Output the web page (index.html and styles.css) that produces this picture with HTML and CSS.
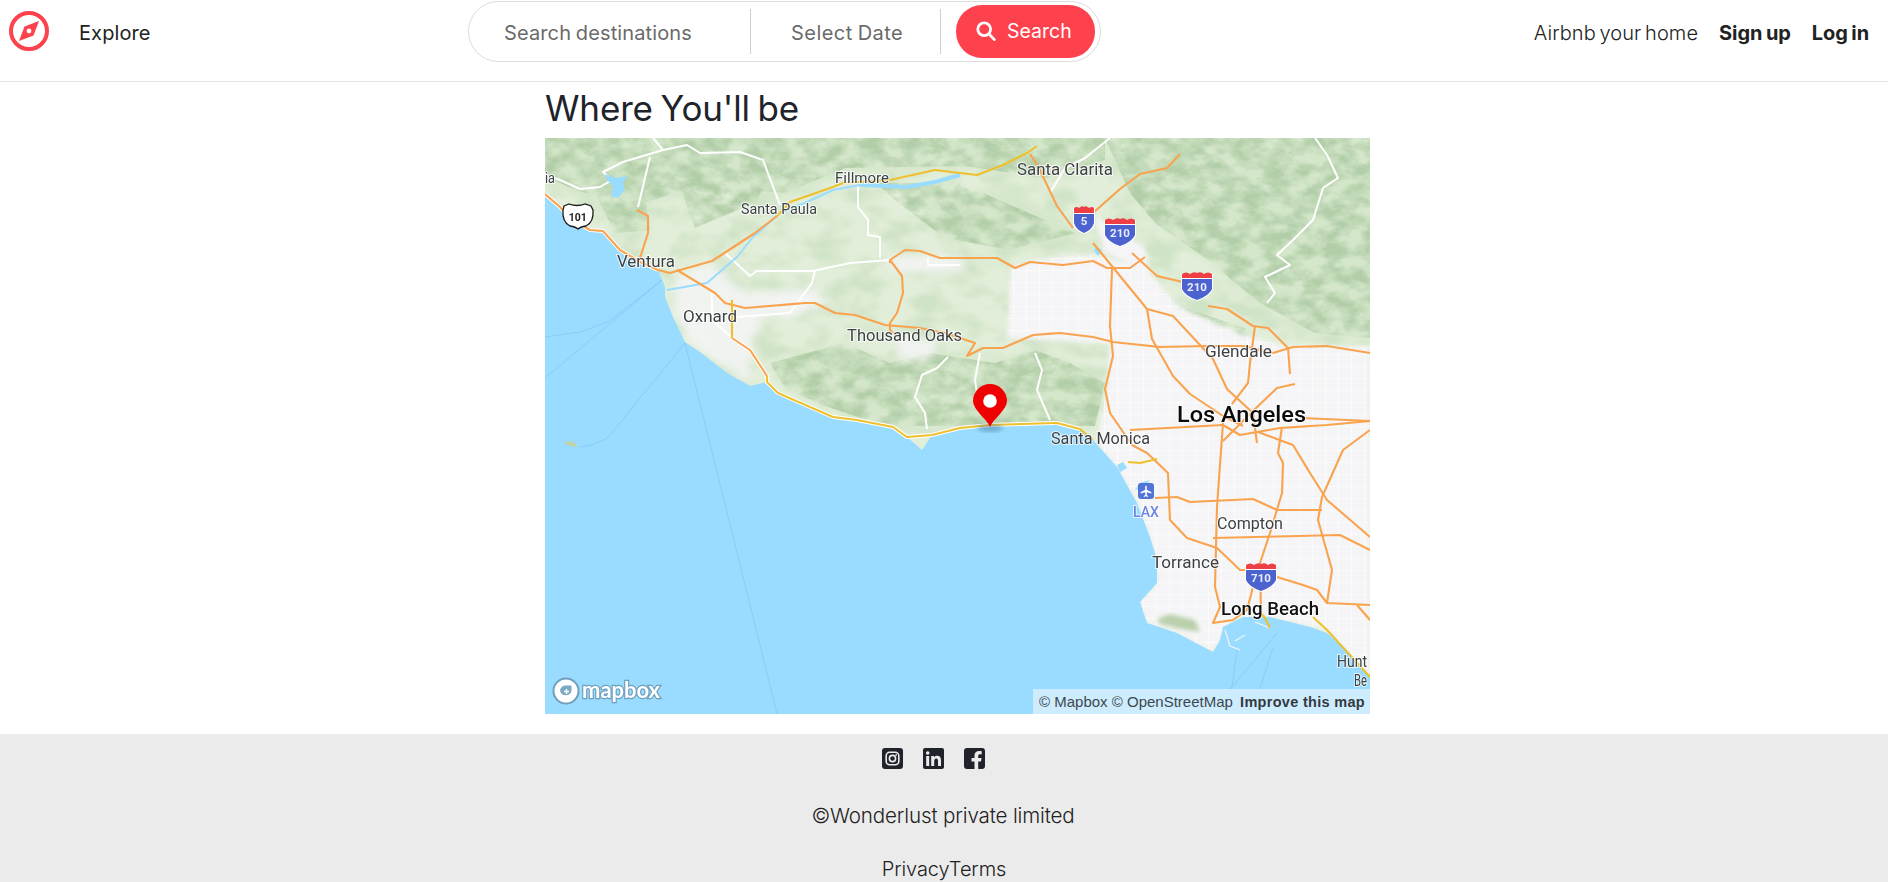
FILE: index.html
```html
<!DOCTYPE html>
<html lang="en">
<head>
<meta charset="utf-8">
<title>Where You'll be</title>
<link rel="stylesheet" href="styles.css">
</head>
<body>
<nav class="nav">
  <div class="nav-left">
    <svg class="logo" viewBox="0 0 40 40"><circle class="logo-ring" cx="20" cy="20" r="18"/><path class="logo-needle" d="M30 10 L24.5 24.5 L10 30 L15.5 15.5 Z"/><circle class="logo-hole" cx="20" cy="20" r="2.4"/></svg>
    <a class="nav-link explore">Explore</a>
  </div>
  <div class="searchbar">
    <span class="field field-dest">Search destinations</span>
    <span class="divider"></span>
    <span class="field field-date">Select Date</span>
    <span class="divider"></span>
    <button class="search-btn">
      <svg class="search-icon" viewBox="0 0 20 20"><circle cx="8.2" cy="8.2" r="6.4"/><path d="M13 13 L18.4 18.6"/></svg>
      <span>Search</span>
    </button>
  </div>
  <div class="nav-right">
    <a class="nav-link home-link">Airbnb your home</a>
    <a class="nav-link strong">Sign up</a>
    <a class="nav-link strong">Log in</a>
  </div>
</nav>

<main class="content">
  <h3 class="title">Where You'll be</h3>
  <div class="map">
    <svg class="map-svg" viewBox="0 0 825 576" width="825" height="576">
      <defs>
        <filter id="soft" x="-10%" y="-10%" width="120%" height="120%"><feGaussianBlur stdDeviation="4"/></filter>
        <filter id="softer" x="-10%" y="-10%" width="120%" height="120%"><feGaussianBlur stdDeviation="2"/></filter>
        <filter id="hill" x="0" y="0" width="100%" height="100%">
          <feTurbulence type="fractalNoise" baseFrequency="0.05 0.075" numOctaves="4" seed="7" result="n"/>
          <feColorMatrix in="n" type="matrix" values="0 0 0 0 0  0 0 0 0 0  0 0 0 0 0  2.4 0 0 0 -0.72" result="a"/>
          <feComposite in="SourceGraphic" in2="a" operator="in" result="c"/>
          <feGaussianBlur in="c" stdDeviation="0.7"/>
        </filter>
        <filter id="faint" x="0" y="0" width="100%" height="100%">
          <feTurbulence type="fractalNoise" baseFrequency="0.03 0.05" numOctaves="3" seed="21" result="n"/>
          <feColorMatrix in="n" type="matrix" values="0 0 0 0 0  0 0 0 0 0  0 0 0 0 0  3 0 0 0 -1.2" result="a"/>
          <feComposite in="SourceGraphic" in2="a" operator="in" result="c"/>
          <feGaussianBlur in="c" stdDeviation="1.2"/>
        </filter>
        <pattern id="grid" width="13" height="12" patternUnits="userSpaceOnUse"><path class="grid-line" d="M0 0H13M0 0V12"/></pattern>
        <clipPath id="urban-clip"><path d="M462 200 L466 130 L490 122 L545 116 L600 130 L635 170 L700 198 L740 208 L825 208 L825 540 L782 492 L725 479 L690 480 L668 514 L632 495 L602 485 L595 464 L612 445 L612 422 L592 365 L572 329 L552 305 L562 250 L565 205 Z"/></clipPath>
      </defs>

      <rect class="land" width="825" height="576"/>
      <rect class="land-noise" width="825" height="300" filter="url(#faint)"/>

      <g class="lowland" filter="url(#soft)">
        <path d="M0 0H560V22L500 40L420 28L300 35L240 60L150 50L90 70L30 55L0 40Z"/>
        <path d="M50 55L100 60L105 92L70 95Z"/>
        <path d="M560 0H825V200L770 195L715 165L660 120L610 85L585 55Z"/>
        <path d="M225 225L300 205L345 225L385 215L450 225L490 212L525 225L560 245L550 288L420 288L340 288L280 268L240 250Z"/>
        <path d="M350 45L415 55L470 50L530 95L465 112L400 100Z"/>
      </g>
      <g class="hills" filter="url(#hill)">
        <path d="M0 0H560V22L500 40L420 28L300 30L240 55L150 48L90 68L30 52L0 38Z"/>
        <path d="M50 55L100 60L105 92L70 95Z"/>
        <path d="M560 0H825V200L770 195L715 165L660 120L610 85L585 55Z"/>
        <path d="M225 225L300 205L345 225L385 215L450 225L490 212L525 225L560 245L550 288L420 288L340 288L280 268L240 250Z"/>
        <path d="M330 45L415 45L530 95L465 112L400 100L360 70Z"/>
        <path d="M640 170L700 190L708 222L665 195Z"/>
        <path d="M130 35L230 30L210 65L150 90Z"/>
      </g>

      <g class="urban" filter="url(#softer)">
        <path d="M462 200 L466 130 L490 122 L545 116 L600 130 L635 170 L700 198 L740 208 L825 208 L825 540 L782 492 L725 479 L690 480 L668 514 L632 495 L602 485 L595 464 L612 445 L612 422 L592 365 L572 329 L552 305 L562 250 L565 205 Z"/>
        <path d="M550 78L600 110L605 135L560 115Z"/>
      </g>
      <g class="urban-soft" filter="url(#soft)">
        <path d="M130 140L165 125L190 145L205 155L250 150L280 165L250 178L215 180L205 215L205 244L182 232L155 212L142 200L130 175Z"/>
        <path d="M340 118L420 118L420 135L350 135Z"/>
        <path d="M350 198L395 203L385 222L352 222Z"/>
        <path d="M225 165L265 150L285 165L245 178Z"/>
      </g>
      <rect class="grid-fill" width="825" height="576" fill="url(#grid)" clip-path="url(#urban-clip)"/>
      <path class="palos" filter="url(#softer)" d="M612 481L625 476L650 482L655 494L635 491L615 486Z"/>

      <g class="white-roads">
        <polyline points="108,0 118,12 142,7 155,15 195,14 218,22 235,67"/>
        <polyline points="118,12 78,24 58,34 67,42 55,49 35,51 15,42 0,37"/>
        <polyline points="105,19 93,69"/>
        <polyline points="180,115 205,138 212,133 268,133 305,125 345,122"/>
        <polyline points="270,133 267,145 245,175 192,179"/>
        <polyline points="167,152 167,182 185,198"/>
        <polyline points="313,47 313,69 323,82 323,97 335,99 335,120"/>
        <polyline points="383,120 383,127 415,127"/>
        <polyline points="403,219 392,230 377,237 370,259 380,275 382,291"/>
        <polyline points="770,0 782,17 793,40 778,50 768,82 748,102 732,117 745,127 720,139 730,155 722,165"/>
        <polyline points="490,215 497,232 492,252 505,282"/>
        <polyline points="435,215 430,242 435,275"/>
        <polyline points="565,0 540,20 520,30 505,55"/>
      </g>

      <path class="water" d="M0 57L15 69L28 85L45 92L58 95L75 112L95 124L113 132L120 149L120 159L128 179L140 204L155 214L182 235L205 248L222 244L233 255L265 269L288 279L312 282L348 289L362 299L377 312L387 297L415 290L445 287L512 285L535 291L548 302L572 329L582 347L592 365L605 399L612 422L612 445L595 464L602 485L632 495L668 514L675 502L678 489L698 479L725 479L765 489L782 495L802 512L825 539V576H0Z"/>
      <path class="water" d="M60 36L70 40L82 38L78 46L80 52L73 60L66 58L68 48L62 42Z"/>
      <polyline class="river river-wide" points="415,37 390,44 362,49 315,47"/>
      <polyline class="river" points="315,47 288,52 262,64 235,75 208,99 192,119 162,145 122,152"/>
      <path class="water" d="M595 345L605 342L598 350L590 352Z"/>
      <path class="water" d="M551 108L557 112L553 118L549 113Z"/>
      <path class="water" d="M572 327L578 324L582 330L575 334Z"/>
      <path class="island" d="M18 304L28 303L33 309L24 308Z"/>
      <g class="harbour">
        <polyline points="680,492 685,508 695,512"/>
        <polyline points="690,503 700,497"/>
        <polyline points="710,484 725,490"/>
      </g>

      <g class="lanes">
        <polyline points="117,142 0,240"/>
        <polyline points="117,142 63,184 35,194 0,199"/>
        <polyline points="140,205 70,291 63,300 47,307 35,309"/>
        <polyline points="140,205 232,576"/>
        <polyline points="692,512 687,549 642,576"/>
        <polyline points="732,495 687,549 662,576"/>
        <polyline points="728,509 707,576"/>
      </g>

      <g class="road-casing">
        <polyline points="187,200 205,212 222,238 222,244 233,255 265,269 288,279 312,282 348,289 362,299 375,298 387,297 415,290 445,287 512,285 535,291"/>
        <polyline points="0,56 15,69 25,80 45,92 58,93 75,112 95,124 113,132"/>
      </g>
      <g class="roads">
        <polyline points="0,56 15,69 25,80 45,92 58,93 75,112 95,124 113,132 125,135 135,132 167,123 210,95 232,78"/>
        <polyline points="132,132 170,155 180,165 200,170 260,165 270,165 290,175 310,177 340,187 375,190 400,195 430,205 422,218 438,210 458,210 488,197 515,195 548,199 568,204 615,209 662,208 698,208 728,215 748,209 782,208 825,215"/>
        <polyline points="187,200 205,212 222,238"/>
        <polyline points="345,125 345,122 360,112 375,113 395,120 415,120 452,120 470,130 485,124 518,127 548,123 562,130 585,130 600,119"/>
        <polyline points="345,122 357,138 358,155 352,175 345,185 345,192 350,197"/>
        <polyline points="92,72 103,78 103,95 95,120"/>
        <polyline points="485,16 493,28 512,68 528,90"/>
        <polyline points="635,16 622,30 595,36 575,51 548,75 547,85"/>
        <polyline points="548,105 602,171 628,178 668,221 682,251 708,275 712,305"/>
        <polyline points="587,115 612,138 642,145"/>
        <polyline points="663,168 682,171 708,188 723,190 743,210 745,236"/>
        <polyline points="710,188 705,225 703,245 687,266"/>
        <polyline points="750,246 732,250 708,273 678,303"/>
        <polyline points="567,131 565,188 568,218 560,251 565,275 587,307 602,315 623,335 625,382 642,400 672,410 695,432 702,432"/>
        <polyline points="602,171 607,201 628,238 645,256 678,278 698,288"/>
        <polyline points="585,292 678,287 695,297 735,290 782,287 825,283"/>
        <polyline points="758,280 825,283"/>
        <polyline points="678,285 672,369 670,449 675,469 668,485 688,482 702,472 708,449"/>
        <polyline points="610,360 632,359 645,364 708,361 732,372 777,372"/>
        <polyline points="737,289 733,315 738,325 737,355 725,395 715,425 716,475"/>
        <polyline points="668,400 795,397 825,412"/>
        <polyline points="732,439 758,447 772,452 782,465 825,467"/>
        <polyline points="782,465 787,432 773,382 777,359 798,312 825,292"/>
        <polyline points="713,294 748,307 765,335 782,362 825,399"/>
        <polyline points="812,467 825,482"/>
      </g>
      <g class="roads-yellow">
        <polyline points="232,78 245,64 288,49 298,45 345,42 390,32 415,35 432,37 458,27 482,15 492,8"/>
        <polyline points="187,162 187,200"/>
        <polyline points="222,238 222,244 233,255 265,269 288,279 312,282 348,289 362,299 375,298 387,297 415,290 445,287 512,285 535,291 548,302"/>
        <polyline points="583,324 595,325 612,321"/>
        <polyline points="768,479 782,492 825,539"/>
        <polyline points="716,475 720,480 725,490"/>
      </g>

      <g class="labels">
        <text x="0" y="45" textLength="10" lengthAdjust="spacingAndGlyphs">ia</text>
        <text x="290" y="45" textLength="54" lengthAdjust="spacingAndGlyphs">Fillmore</text>
        <text x="196" y="76" textLength="76" lengthAdjust="spacingAndGlyphs">Santa Paula</text>
        <text class="lab-m" x="72" y="129" textLength="58" lengthAdjust="spacingAndGlyphs">Ventura</text>
        <text class="lab-m" x="138" y="184" textLength="54" lengthAdjust="spacingAndGlyphs">Oxnard</text>
        <text class="lab-m" x="302" y="203" textLength="115" lengthAdjust="spacingAndGlyphs">Thousand Oaks</text>
        <text class="lab-m" x="472" y="37" textLength="96" lengthAdjust="spacingAndGlyphs">Santa Clarita</text>
        <text class="lab-m" x="660" y="219" textLength="67" lengthAdjust="spacingAndGlyphs">Glendale</text>
        <text class="lab-xl" x="632" y="284" textLength="129" lengthAdjust="spacingAndGlyphs">Los Angeles</text>
        <text class="lab-m" x="506" y="306" textLength="99" lengthAdjust="spacingAndGlyphs">Santa Monica</text>
        <text class="lab-m" x="672" y="391" textLength="66" lengthAdjust="spacingAndGlyphs">Compton</text>
        <text class="lab-m" x="607" y="430" textLength="67" lengthAdjust="spacingAndGlyphs">Torrance</text>
        <text class="lab-l" x="676" y="477" textLength="98" lengthAdjust="spacingAndGlyphs">Long Beach</text>
        <text class="lab-m" x="792" y="529" textLength="30" lengthAdjust="spacingAndGlyphs">Hunt</text>
        <text class="lab-m" x="809" y="548" textLength="13" lengthAdjust="spacingAndGlyphs">Be</text>
      </g>

      <g class="airport">
        <rect x="593" y="345" width="16" height="16" rx="3"/>
        <path class="plane" d="M601 347.5C600.3 347.5 600.2 348.5 600.2 349.5V351.8L595.6 354.2V355.4L600.2 354.2V356.9L598.8 358V358.9L601 358.2L603.2 358.9V358L601.8 356.9V354.2L606.4 355.4V354.2L601.8 351.8V349.5C601.8 348.5 601.7 347.5 601 347.5Z"/>
        <text x="601" y="379" text-anchor="middle" textLength="26" lengthAdjust="spacingAndGlyphs">LAX</text>
      </g>

      <g class="shield-us">
        <path d="M19 68 L24 66 Q32 69 40 66 L46 68 L48 72 Q49 84 41 88 Q35 89 33 91 Q31 89 25 88 Q17 84 18 72 Z"/>
        <text x="32.800" y="83" text-anchor="middle">101</text>
      </g>
      <g class="shield-i">
        <path class="s-white" d="M528 70H550V86Q548 93 539 96Q530 93 528 86Z"/>
        <path class="s-blue" d="M529 76H549V85Q547 92 539 95Q531 92 529 85Z"/>
        <path class="s-red" d="M529 75V70Q532 68 534 70Q537 67 539 69Q541 67 544 70Q547 68 549 70V75Z"/>
        <text x="539" y="87" text-anchor="middle">5</text>
      </g>
      <g class="shield-i">
        <path class="s-white" d="M559 82H591V97Q588 105 575 109Q562 105 559 97Z"/>
        <path class="s-blue" d="M560 87H590V97Q587 104 575 108Q563 104 560 97Z"/>
        <path class="s-red" d="M560 86V82Q564 79 568 82Q572 79 575 81Q579 79 582 82Q586 79 590 82V86Z"/>
        <text x="575" y="99" text-anchor="middle">210</text>
      </g>
      <g class="shield-i">
        <path class="s-white" d="M636 136H668V151Q665 159 652 163Q639 159 636 151Z"/>
        <path class="s-blue" d="M637 141H667V151Q664 158 652 162Q640 158 637 151Z"/>
        <path class="s-red" d="M637 140V136Q641 133 645 136Q649 133 652 135Q656 133 659 136Q663 133 667 136V140Z"/>
        <text x="652" y="153" text-anchor="middle">210</text>
      </g>
      <g class="shield-i">
        <path class="s-white" d="M700 427H732V442Q729 450 716 454Q703 450 700 442Z"/>
        <path class="s-blue" d="M701 432H731V442Q728 449 716 453Q704 449 701 442Z"/>
        <path class="s-red" d="M701 431V427Q705 424 709 427Q713 424 716 426Q720 424 723 427Q727 424 731 427V431Z"/>
        <text x="716" y="444" text-anchor="middle">710</text>
      </g>

      <ellipse class="pin-shadow" cx="445" cy="290" rx="13" ry="4" filter="url(#softer)"/>
      <path class="pin" d="M445 289C442 281 428 272 428 263A17 17 0 0 1 462 263C462 272 448 281 445 289Z"/>
      <circle class="pin-dot" cx="445" cy="263" r="6.8"/>

      <g class="mapbox-logo">
        <circle class="mb-ring" cx="21" cy="553" r="12.500"/>
        <path class="mb-mark" d="M26.500 547.500V553A6 6 0 0 1 15 553A5.500 5.500 0 0 1 21 547.500Z"/>
        <path class="mb-plus" d="M21.500 551V556M19 553.500H24"/>
        <text x="37" y="560" textLength="78" lengthAdjust="spacingAndGlyphs">mapbox</text>
      </g>
      <path class="corner-mark" d="M818 576V568L825 576"/>
    </svg>
    <div class="attrib"><span>© Mapbox</span> <span>© OpenStreetMap</span> <b class="improve">Improve this map</b></div>
  </div>
</main>

<footer class="footer">
  <div class="socials">
    <svg class="social" viewBox="0 0 21 21"><rect class="sq" width="21" height="21" rx="3"/><rect class="ig" x="4.200" y="4.200" width="12.600" height="12.600" rx="3.500"/><circle class="ig" cx="10.500" cy="10.500" r="3.100"/><circle class="ig-dot" cx="14.200" cy="6.800" r="0.900"/></svg>
    <svg class="social" viewBox="0 0 21 21"><rect class="sq" width="21" height="21" rx="2"/><rect class="glyph" x="3.200" y="8" width="3" height="10"/><circle class="glyph" cx="4.700" cy="5" r="1.800"/><path class="glyph" d="M8.200 8H11V9.400C11.500 8.500 12.600 7.800 14 7.800C17 7.800 18 9.700 18 12.300V18H15V12.900C15 11.600 14.700 10.400 13.300 10.400C11.900 10.400 11.200 11.400 11.200 12.900V18H8.200Z"/></svg>
    <svg class="social" viewBox="0 0 21 21"><path class="sq" d="M3 0H18A3 3 0 0 1 21 3V18A3 3 0 0 1 18 21H14.200V13.500H17L17.500 10H14.200V8C14.200 7 14.700 6.200 16 6.200H17.700V3.300C16.800 3.100 15.800 3 15 3C12.300 3 10.500 4.700 10.500 7.500V10H7.500V13.500H10.500V21H3A3 3 0 0 1 0 18V3A3 3 0 0 1 3 0Z"/></svg>
  </div>
  <p class="copyright">©Wonderlust private limited</p>
  <p class="terms"><a>Privacy</a><a>Terms</a></p>
</footer>
</body>
</html>
```

FILE: styles.css
```css
* { box-sizing: border-box; }
html, body { margin: 0; padding: 0; }
body {
  height: 882px;
  overflow: hidden;
  display: flex;
  flex-direction: column;
  background: #fff;
  color: #222;
  font-family: Inter, "Open Sans", sans-serif;
}

/* nav */
.nav {
  height: 82px;
  flex: none;
  display: flex;
  align-items: flex-start;
  border-bottom: 1px solid #e2e2e2;
  padding-left: 9px;
  padding-top: 1px;
}
.nav-left { display: flex; align-items: center; height: 61px; width: 459px; padding-top: 2px; }
.logo { width: 40px; height: 40px; margin-right: 30px; margin-top: -4px; }
.logo-ring { fill: none; stroke: #fe424d; stroke-width: 4; }
.logo-needle { fill: #fe424d; }
.logo-hole { fill: #fff; }
.nav-link { font-size: 20px; font-weight: 400; color: #222; }
.explore { letter-spacing: 0.1px; }
.searchbar {
  width: 633px;
  height: 61px;
  border: 1.5px solid #dcdcdc;
  border-radius: 31px;
  display: flex;
  align-items: center;
}
.field { font-size: 20px; color: #6a6a6a; white-space: nowrap; padding-top: 2px; }
.field-dest { margin-left: 35px; width: 246px; word-spacing: -1px; letter-spacing: 0.12px; }
.field-date { margin-left: 40px; width: 149px; word-spacing: -1px; letter-spacing: 0.45px; }
.divider { width: 1px; height: 45px; background: #cfcfcf; }
.search-btn {
  margin-left: 15px;
  width: 139px;
  height: 53px;
  border: 0;
  border-radius: 26px;
  background: #fe424d;
  color: #fff;
  font: 400 19.5px Inter, sans-serif;
  display: flex;
  align-items: center;
  padding: 0 0 1px 20px;
  gap: 11px;
}
.search-icon { width: 20px; height: 20px; fill: none; stroke: #fff; stroke-width: 2.8; stroke-linecap: round; }
.nav-right {
  margin-left: auto;
  height: 61px;
  display: flex;
  align-items: center;
  padding: 2px 19px 0 0;
  gap: 21px;
}
.home-link { font-weight: 300; letter-spacing: 0.08px; word-spacing: -2px; }
.strong { font-weight: 700; letter-spacing: -0.1px; word-spacing: -1px; }

/* main */
.content { flex: none; height: 652px; padding-left: 545px; }
.title {
  margin: 0;
  height: 56px;
  font-size: 35px;
  line-height: 53px;
  font-weight: 400;
  color: #20242a;
  letter-spacing: -0.15px;
  word-spacing: -2px;
}
.map { position: relative; width: 825px; height: 576px; overflow: hidden; background: #99dcff; }
.map-svg { display: block; }

.land { fill: #e2eed9; }
.land-noise { fill: #cfe3c6; }
.lowland path { fill: #d5e7cb; }
.hills path { fill: #b2cea8; }
.urban path { fill: #f5f4f6; }
.urban-soft path { fill: #f5f4f6; opacity: 0.85; }
.grid-line { stroke: #fff; stroke-width: 1.1; fill: none; }
.palos { fill: #b9d0ab; }
.water { fill: #99dcff; }
.river { fill: none; stroke: #99dcff; stroke-width: 2; stroke-linejoin: round; }
.river-wide { stroke-width: 4; }
.island { fill: #bcd3ae; }
.harbour polyline { fill: none; stroke: #f5f4f6; stroke-width: 1.2; }
.white-roads polyline { fill: none; stroke: #fff; stroke-width: 2; stroke-linejoin: round; }
.lanes polyline { fill: none; stroke: #83c9f8; stroke-width: 0.8; }
.road-casing polyline { fill: none; stroke: #fff; stroke-width: 4; stroke-linejoin: round; }
.roads polyline { fill: none; stroke: #f9a34e; stroke-width: 2.100; stroke-linejoin: round; }
.roads-yellow polyline { fill: none; stroke: #efc02e; stroke-width: 2.100; stroke-linejoin: round; }

.labels text {
  font-family: Roboto, "Noto Sans", sans-serif;
  font-size: 14px;
  fill: #3d4144;
  stroke: #fff;
  stroke-width: 2px;
  stroke-opacity: 0.75;
  paint-order: stroke;
}
.labels .lab-m { font-size: 16px; }
.labels .lab-l { font-size: 18.5px; fill: #111; font-weight: 500; }
.labels .lab-xl { font-size: 22.5px; fill: #0a0a0a; font-weight: 500; }

.airport rect { fill: #5473d6; }
.airport .plane { fill: #fff; }
.airport text { font: 500 15px Roboto, sans-serif; fill: #6b85e0; stroke: #fff; stroke-width: 2px; stroke-opacity: .7; paint-order: stroke; }

.shield-us path { fill: #fff; stroke: #1c1c1c; stroke-width: 1.3; }
.shield-us text { font: 700 10.5px Roboto, sans-serif; fill: #222; }
.s-white { fill: #fff; }
.s-blue { fill: #4c63cf; }
.s-red { fill: #ee3f45; }
.shield-i text { font: 700 11.5px Roboto, sans-serif; fill: #e8ecff; }

.pin { fill: #f00000; }
.pin-dot { fill: #fff; }
.pin-shadow { fill: #4a7fa0; opacity: 0.5; }

.mb-ring { fill: #fff; stroke: #6f9fbb; stroke-width: 2; }
.mb-mark { fill: #7ba9c4; }
.mb-plus { stroke: #fff; stroke-width: 1.5; fill: none; }
.mapbox-logo text {
  font: 700 23px Lato, sans-serif;
  fill: #fff;
  stroke: #6f9fbb;
  stroke-width: 2.5px;
  paint-order: stroke;
}
.corner-mark { fill: none; stroke: #9aa5ad; stroke-width: 1; }

.attrib {
  position: absolute;
  right: 0;
  bottom: 0;
  width: 337px;
  height: 25px;
  padding: 4px 0 0 6px;
  background: #cdedff;
  font: 15px/18px "Liberation Sans", Arial, sans-serif;
  color: #3f474d;
  white-space: nowrap;
}
.improve { margin-left: 3px; color: #33393f; letter-spacing: 0.3px; font-size: 14.5px; }

/* footer */
.footer {
  flex: 1;
  background: #ebebeb;
  padding-top: 14px;
  text-align: center;
  overflow: hidden;
}
.socials { display: flex; justify-content: center; gap: 20px; height: 21px; margin-right: 21px; }
.social { width: 21px; height: 21px; }
.sq { fill: #20242a; }
.ig { fill: none; stroke: #ebebeb; stroke-width: 1.600; }
.ig-dot { fill: #ebebeb; }
.glyph { fill: #ebebeb; }
.copyright { margin: 33px 2px 0 0; font-size: 20.6px; line-height: 28px; font-weight: 300; color: #222; letter-spacing: -0.15px; }
.terms { margin: 25px 0 0 0; font-size: 20px; line-height: 28px; font-weight: 300; color: #222; letter-spacing: -0.1px; }
```
